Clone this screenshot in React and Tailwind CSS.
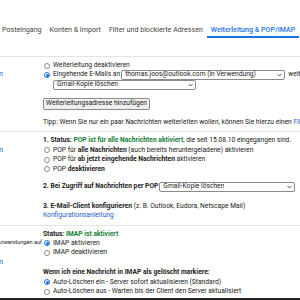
import React from 'react';

const Radio = ({ on }) =>
  on ? (
    <span className="w-[6px] h-[6px] rounded-full border border-[#1a73e8] bg-white flex items-center justify-center shrink-0">
      <span className="w-[3px] h-[3px] rounded-full bg-[#1a73e8]" />
    </span>
  ) : (
    <span className="w-[6px] h-[6px] rounded-full border border-[#8a8a8a] bg-white shrink-0" />
  );

const RadioRow = ({ on, children, h = 'h-[9.5px]' }) => (
  <div className={`flex items-center ${h}`}>
    <span className="w-[10px] flex justify-start pl-[1px]">
      <Radio on={on} />
    </span>
    <span className="whitespace-nowrap">{children}</span>
  </div>
);

const Chevron = () => (
  <svg width="5" height="4" viewBox="0 0 10 6" className="shrink-0">
    <path d="M1 1l4 4 4-4" fill="none" stroke="#333" strokeWidth="1.6" />
  </svg>
);

const Select = ({ children, w }) => (
  <div className={`${w} h-[10px] border border-[#8a8a8a] rounded-[2px] bg-white flex items-center justify-between pl-[3px] pr-[2px] shrink-0`}>
    <span className="whitespace-nowrap overflow-hidden">{children}</span>
    <Chevron />
  </div>
);

const Link = ({ children }) => <span className="text-[#1a5fcc]">{children}</span>;

const Side = ({ children, top }) => (
  <div className={`flex justify-end whitespace-nowrap ${top}`}>{children}</div>
);

export default function App() {
  const tabs = ['Posteingang', 'Konten & Import', 'Filter und blockierte Adressen', 'Weiterleitung & POP/IMAP', 'Add-ons'];
  return (
    <div className="w-[300px] h-[300px] overflow-hidden bg-white flex flex-col text-[6.7px] leading-[9.5px] text-[#222] font-['Roboto','Liberation_Sans',sans-serif]">
      <div className="h-[38px] shrink-0 flex items-end ml-[-2px] text-[7.1px] text-[#444] whitespace-nowrap">
        {tabs.map((t) => (
          <div
            key={t}
            className={
              t.startsWith('Weiterleitung')
                ? 'px-[4px] pb-[1px] leading-[10px] border-b-2 border-[#1a73e8] text-[#1a73e8] font-medium'
                : 'px-[4px] pb-[3px] leading-[10px]'
            }
          >
            {t}
          </div>
        ))}
      </div>
      <div className="h-[19px] shrink-0 border-b border-[#e4e4e4]" />

      {/* Weiterleitung */}
      <div className="flex shrink-0 h-[75px] border-b border-[#e4e4e4]">
        <div className="w-[43px] shrink-0 overflow-hidden flex flex-col">
          <Side top="mt-[13px] pr-[40px]"><Link>Weitere Informationen</Link></Side>
        </div>
        <div className="flex flex-col pt-[4px]">
          <RadioRow h="h-[9px]">Weiterleitung deaktivieren</RadioRow>
          <div className="flex items-center h-[10px]">
            <span className="w-[10px] flex pl-[1px]"><Radio on /></span>
            <span className="whitespace-nowrap mr-[1px]">Eingehende E-Mails an</span>
            <Select w="w-[164px]">thomas.joos@outlook.com (in Verwendung)</Select>
            <span className="whitespace-nowrap ml-[3px]">weiterleiten und</span>
          </div>
          <div className="ml-[10px]">
            <Select w="w-[143px]">Gmail-Kopie löschen</Select>
          </div>
          <div className="mt-[8px] h-[12px] w-[107px] border border-[#8a8a8a] rounded-[2px] bg-[#efefef] flex items-center justify-center whitespace-nowrap">
            Weiterleitungsadresse hinzufügen
          </div>
          <div className="mt-[8px] h-[10px] whitespace-nowrap">
            Tipp: Wenn Sie nur ein paar Nachrichten weiterleiten wollen, können Sie hierzu einen <Link>Filter erstellen!</Link>
          </div>
        </div>
      </div>

      {/* POP */}
      <div className="flex shrink-0 h-[94px] border-b border-[#e4e4e4]">
        <div className="w-[43px] shrink-0 overflow-hidden flex flex-col">
          <Side top="mt-[13.5px] pr-[40px]"><Link>Weitere Informationen</Link></Side>
        </div>
        <div className="flex flex-col pt-[4px]">
          <div className="h-[9.5px] whitespace-nowrap">
            <b>1. Status: </b>
            <b className="text-[#188038]">POP ist für alle Nachrichten aktiviert</b>, die seit 15.08.10 eingegangen sind.
          </div>
          <RadioRow>POP für <b>alle Nachrichten</b> (auch bereits heruntergeladene) aktivieren</RadioRow>
          <RadioRow>POP für <b>ab jetzt eingehende Nachrichten</b> aktivieren</RadioRow>
          <RadioRow>POP <b>deaktivieren</b></RadioRow>
          <div className="mt-[8px] h-[10px] flex items-center whitespace-nowrap">
            <b className="mr-[1px]">2. Bei Zugriff auf Nachrichten per POP</b>
            <Select w="w-[136px]">Gmail-Kopie löschen</Select>
          </div>
          <div className="mt-[9.5px] h-[9.5px] whitespace-nowrap">
            <b>3. E-Mail-Client konfigurieren</b> (z. B. Outlook, Eudora, Netscape Mail)
          </div>
          <div className="h-[9.5px] whitespace-nowrap"><Link>Konfigurationsanleitung</Link></div>
        </div>
      </div>

      {/* IMAP */}
      <div className="flex flex-1 min-h-0">
        <div className="w-[43px] shrink-0 overflow-hidden flex flex-col">
          <Side top="mt-[12px] pr-[1px] text-[5.6px] leading-[9.5px]">(Gmail von anderen Clients mit IMAP abrufen: Anwendungen auf</Side>
          <Side top="mt-[10px] pr-[40px]"><Link>Weitere Informationen</Link></Side>
        </div>
        <div className="flex flex-col pt-[3.5px]">
          <div className="h-[9px] whitespace-nowrap">
            <b>Status: </b>
            <b className="text-[#188038]">IMAP ist aktiviert</b>
          </div>
          <RadioRow on>IMAP aktivieren</RadioRow>
          <RadioRow>IMAP deaktivieren</RadioRow>
          <div className="mt-[10.5px] h-[9.5px] whitespace-nowrap">
            <b>Wenn ich eine Nachricht in IMAP als gelöscht markiere:</b>
          </div>
          <RadioRow on>Auto-Löschen ein - Server sofort aktualisieren (Standard)</RadioRow>
          <RadioRow>Auto-Löschen aus - Warten bis der Client den Server aktualisiert</RadioRow>
        </div>
      </div>
      <div className="h-[2px] shrink-0 bg-[#222]" />
    </div>
  );
}
